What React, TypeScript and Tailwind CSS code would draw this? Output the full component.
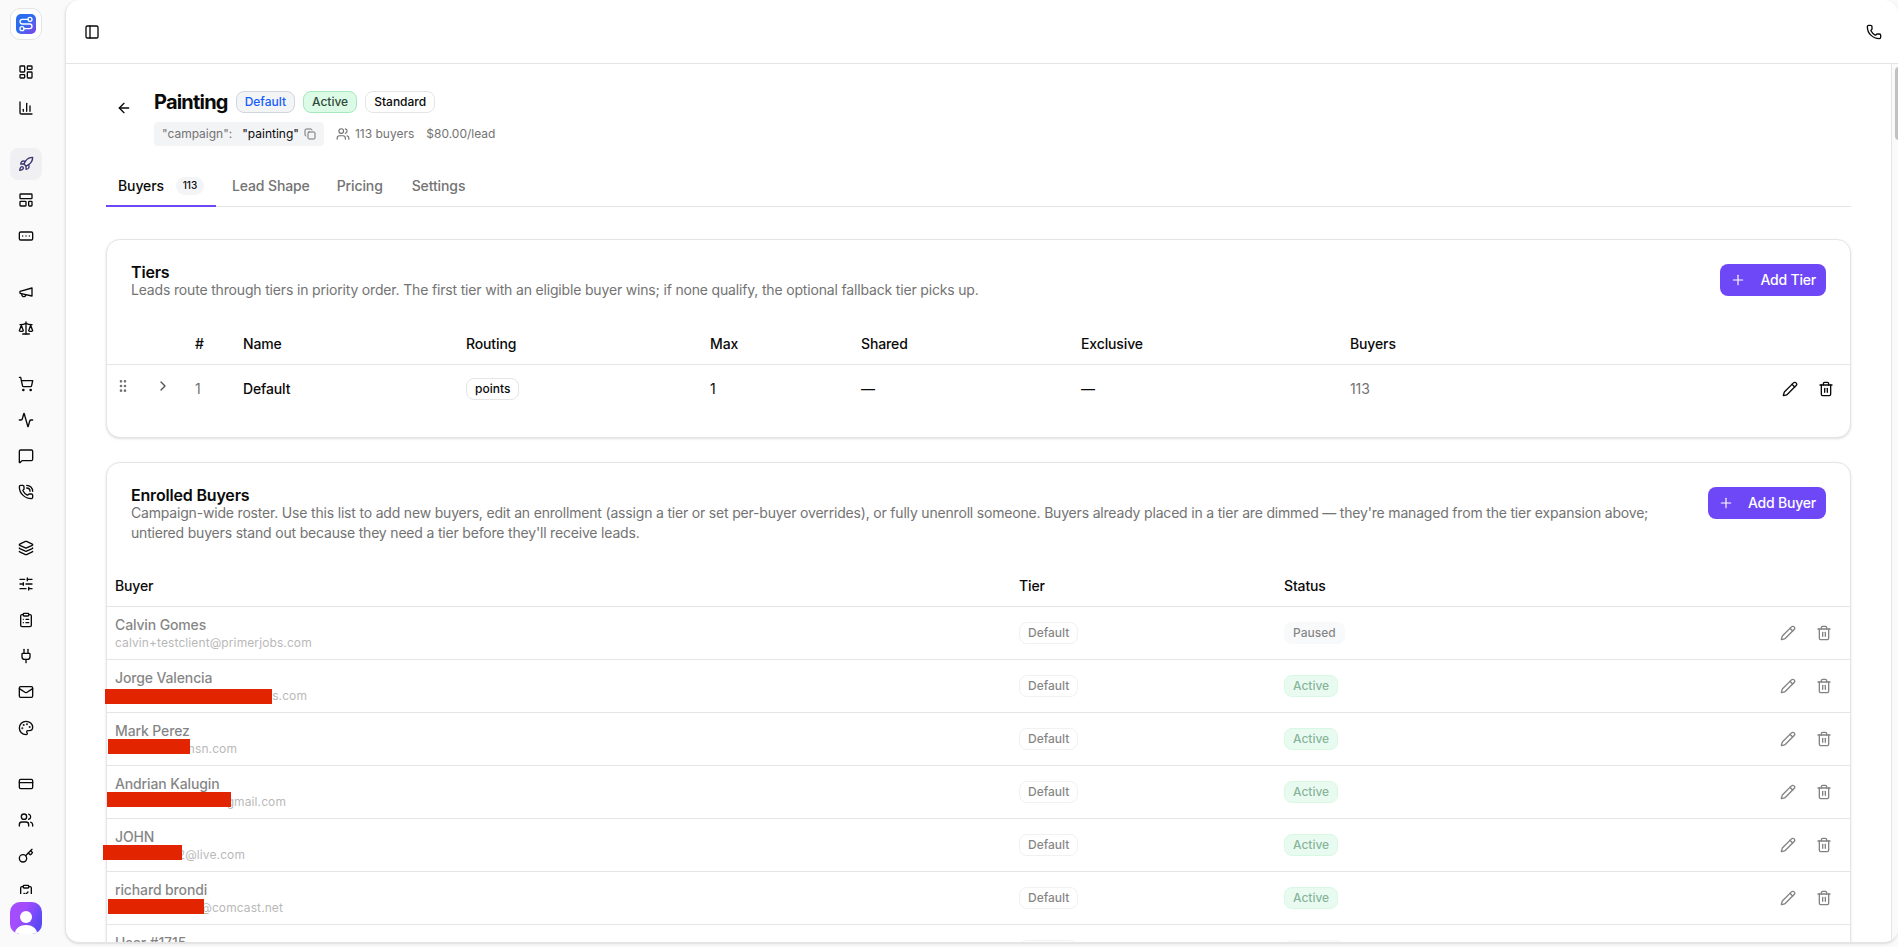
import React from 'react';
import {
  Activity,
  ArrowLeft,
  ChartColumn,
  ChevronRight,
  ClipboardCheck,
  ClipboardList,
  Copy,
  CreditCard,
  GripVertical,
  Key,
  Layers,
  LayoutDashboard,
  LayoutTemplate,
  Mail,
  MessageSquare,
  Palette,
  PanelLeft,
  Pencil,
  Phone,
  PhoneCall,
  Plug,
  Plus,
  RectangleEllipsis,
  Rocket,
  Route,
  Scale,
  ShoppingCart,
  SlidersHorizontal,
  Trash2,
  Users,
} from 'lucide-react';

interface Buyer {
  name: string;
  email: string;
  emailWidth?: string;
  mask?: string;
  status: 'Active' | 'Paused';
}

type IconType = React.ComponentType<{ className?: string }>;

const Megaphone = ({ className }: { className?: string }) => (
  <svg
    viewBox="0 0 24 24"
    fill="none"
    stroke="currentColor"
    strokeWidth="2"
    strokeLinecap="round"
    strokeLinejoin="round"
    className={className}
  >
    <path d="m3 11 18-5v12L3 14v-3z" />
    <path d="M11.6 16.8a3 3 0 1 1-5.8-1.6" />
  </svg>
);

const navGroups: IconType[][] = [
  [LayoutDashboard, ChartColumn],
  [Rocket, LayoutTemplate, RectangleEllipsis],
  [Megaphone, Scale],
  [ShoppingCart, Activity, MessageSquare, PhoneCall],
  [Layers, SlidersHorizontal, ClipboardList, Plug, Mail, Palette],
  [CreditCard, Users, Key, ClipboardCheck],
];

const buyers: Buyer[] = [
  { name: 'Calvin Gomes', email: 'calvin+testclient@primerjobs.com', status: 'Paused' },
  { name: 'Jorge Valencia', email: 's.com', emailWidth: 'w-[192px]', mask: '-left-[10px] top-[21px] w-[167px]', status: 'Active' },
  { name: 'Mark Perez', email: 'msn.com', emailWidth: 'w-[122px]', mask: '-left-[7px] top-[18px] w-[82px]', status: 'Active' },
  { name: 'Andrian Kalugin', email: 'gmail.com', emailWidth: 'w-[171px]', mask: '-left-[8px] top-[18px] w-[124px]', status: 'Active' },
  { name: 'JOHN', email: '2@live.com', emailWidth: 'w-[130px]', mask: '-left-[12px] top-[18px] w-[79px]', status: 'Active' },
  { name: 'richard brondi', email: '@comcast.net', emailWidth: 'w-[168px]', mask: '-left-[7px] top-[19px] w-[96px]', status: 'Active' },
  { name: 'User #1715', email: '', status: 'Paused' },
];

const badgeStyles = {
  outline: 'border-neutral-200 text-neutral-950',
  info: 'border-gray-300 bg-gray-100 text-blue-600',
  success: 'border-[#a5e8bd] bg-[#dcfbe7] text-[#2f4a3a]',
  active: 'border-[#b0f5c9] bg-[#d5f8e4] text-[#0b6b35]',
  muted: 'border-transparent bg-gray-100 text-neutral-950',
};

const Badge = ({ variant = 'outline', children }: { variant?: keyof typeof badgeStyles; children: React.ReactNode }) => (
  <span className={`inline-flex h-[22px] items-center rounded-lg border px-2 text-xs font-medium tracking-normal ${badgeStyles[variant]}`}>
    {children}
  </span>
);

const AddButton = ({ label }: { label: string }) => (
  <button className="flex h-8 shrink-0 items-center gap-3.5 rounded-lg bg-[#6e48f6] px-2.5 text-sm font-medium tracking-[-0.2px] text-white">
    <Plus className="h-4 w-4" strokeWidth={1.75} />
    {label}
  </button>
);

const RowActions = () => (
  <div className="flex justify-end gap-5">
    <Pencil className="h-4 w-4" />
    <Trash2 className="h-4 w-4" />
  </div>
);

const Sidebar = () => (
  <aside className="flex h-full w-[65px] shrink-0 flex-col pl-2.5 pt-2">
    <div className="flex h-8 w-8 shrink-0 items-center justify-center rounded-[10px] border border-neutral-200 bg-white">
      <div className="flex h-5 w-5 items-center justify-center rounded-[5px] bg-linear-to-br from-[#2b6cf0] from-50% to-[#7c3aed]">
        <Route className="h-4 w-4 text-white" strokeWidth={2} />
      </div>
    </div>
    <nav className="mt-4 flex h-[838px] flex-col gap-6 overflow-hidden">
      {navGroups.map((group, i) => (
        <div key={i} className="flex flex-col gap-1">
          {group.map((Icon, j) => {
            const current = Icon === Rocket;
            return (
              <a
                key={j}
                className={`flex h-8 w-8 shrink-0 items-center justify-center rounded-lg ${current ? 'bg-[#f0f0f3] text-[#3b3470]' : 'text-neutral-950'}`}
              >
                <Icon className="h-4 w-4" />
              </a>
            );
          })}
        </div>
      ))}
    </nav>
    <svg viewBox="0 0 32 32" className="mt-2 h-8 w-8 shrink-0 rounded-[10px]">
      <defs>
        <linearGradient id="avatar" x1="0" y1="0" x2="1" y2="0.5">
          <stop offset="0.45" stopColor="#a34dff" />
          <stop offset="1" stopColor="#5a48f5" />
        </linearGradient>
      </defs>
      <rect width="32" height="32" fill="url(#avatar)" />
      <circle cx="16" cy="15" r="6" fill="white" />
      <path d="M4.5 32c1-6 5.5-9 11.5-9s10.5 3 11.5 9z" fill="white" />
    </svg>
  </aside>
);

const PageHeader = () => (
  <div className="flex h-14 gap-3">
    <div className="flex h-9 w-9 items-center justify-center">
      <ArrowLeft className="h-4 w-4" />
    </div>
    <div className="flex flex-col gap-2">
      <div className="flex h-6 items-center gap-2">
        <h1 className="text-xl font-bold tracking-[-0.8px]">Painting</h1>
        <Badge variant="info">Default</Badge>
        <Badge variant="success">Active</Badge>
        <Badge>Standard</Badge>
      </div>
      <div className="flex h-6 items-center text-xs text-neutral-500">
        <div className="flex h-6 items-center rounded bg-gray-100 px-2">
          <span>"campaign":</span>
          <span className="ml-2.5 text-neutral-950">"painting"</span>
          <Copy className="ml-[5px] h-3 w-3" />
        </div>
        <Users className="ml-3 mr-[5px] h-3.5 w-3.5" />
        <span>113 buyers</span>
        <span className="ml-3">$80.00/lead</span>
      </div>
    </div>
  </div>
);

const Tabs = () => (
  <div className="mt-5 flex h-[41px] border-b border-neutral-200 text-sm font-medium tracking-[-0.12px] text-neutral-500">
    <div className="-mb-px flex w-[110px] items-center justify-between border-b-2 border-[#6e48f6] px-3 text-neutral-950">
      Buyers
      <span className="flex h-[18px] w-7 items-center justify-center rounded-full bg-gray-100 text-[10px] tracking-normal">113</span>
    </div>
    <div className="flex items-center px-4">Lead Shape</div>
    <div className="flex items-center pl-[11px] pr-[13px]">Pricing</div>
    <div className="flex items-center px-4">Settings</div>
  </div>
);

const TiersCard = () => (
  <section className="mt-8 h-[199px] rounded-[14px] border border-neutral-200 bg-white pt-6 shadow-sm">
    <div className="flex h-[60px] items-start justify-between px-6">
      <div>
        <h2 className="text-base font-semibold leading-4 tracking-[-0.18px]">Tiers</h2>
        <p className="text-sm tracking-[-0.17px] text-neutral-500">
          Leads route through tiers in priority order. The first tier with an eligible buyer wins; if none qualify, the
          optional fallback tier picks up.
        </p>
      </div>
      <AddButton label="Add Tier" />
    </div>
    <table className="w-full table-fixed text-left text-sm tracking-[-0.13px]">
      <colgroup>
        <col className="w-[40px]" />
        <col className="w-[40px]" />
        <col className="w-[48px]" />
        <col className="w-[223px]" />
        <col className="w-[244px]" />
        <col className="w-[151px]" />
        <col className="w-[220px]" />
        <col className="w-[269px]" />
        <col />
      </colgroup>
      <thead>
        <tr className="h-10 border-b border-neutral-200">
          {['', '', '#', 'Name', 'Routing', 'Max', 'Shared', 'Exclusive', 'Buyers'].map((h, i) => (
            <th key={i} className="px-2 font-medium">{h}</th>
          ))}
        </tr>
      </thead>
      <tbody>
        <tr className="h-[49px]">
          <td className="px-2 pb-1.5 text-neutral-500"><GripVertical className="h-4 w-4" /></td>
          <td className="px-2 pb-1.5 text-neutral-600"><ChevronRight className="h-4 w-4" /></td>
          <td className="px-2 text-neutral-500">1</td>
          <td className="px-2 font-medium">Default</td>
          <td className="px-2"><div className="flex"><Badge>points</Badge></div></td>
          <td className="px-2">1</td>
          <td className="px-2">—</td>
          <td className="px-2">—</td>
          <td className="pl-2 pr-4">
            <div className="flex items-center justify-between">
              <span className="text-neutral-500">113</span>
              <RowActions />
            </div>
          </td>
        </tr>
      </tbody>
    </table>
  </section>
);

const BuyerRow = ({ buyer }: { buyer: Buyer }) => (
  <tr className="h-[53px] border-b border-neutral-200">
    <td className="px-2">
      <div className="relative">
        <div className="opacity-50">
          <div className="font-medium">{buyer.name}</div>
          <div className={`h-4 text-xs tracking-[0.1px] text-neutral-500 ${buyer.emailWidth ? `text-right ${buyer.emailWidth}` : ''}`}>
            {buyer.email}
          </div>
        </div>
        {buyer.mask && <div className={`absolute h-[15px] bg-[#e32400] ${buyer.mask}`} />}
      </div>
    </td>
    <td className="px-2"><div className="flex opacity-50"><Badge>Default</Badge></div></td>
    <td className="px-2">
      <div className="flex opacity-50"><Badge variant={buyer.status === 'Active' ? 'active' : 'muted'}>{buyer.status}</Badge></div>
    </td>
    <td className="pr-[18px]"><div className="opacity-50"><RowActions /></div></td>
  </tr>
);

const EnrolledBuyersCard = () => (
  <section className="mt-6 rounded-[14px] border border-neutral-200 bg-white pt-6 shadow-sm">
    <div className="flex h-[79px] items-start justify-between px-6">
      <div className="w-[1540px]">
        <h2 className="text-base font-semibold leading-4 tracking-[-0.18px]">Enrolled Buyers</h2>
        <p className="text-sm tracking-[-0.185px] text-neutral-500">
          Campaign-wide roster. Use this list to add new buyers, edit an enrollment (assign a tier or set per-buyer
          overrides), or fully unenroll someone. Buyers already placed in a tier are dimmed — they're managed from the
          tier expansion above; untiered buyers stand out because they need a tier before they'll receive leads.
        </p>
      </div>
      <AddButton label="Add Buyer" />
    </div>
    <table className="w-full table-fixed text-left text-sm tracking-[-0.13px]">
      <colgroup>
        <col className="w-[904px]" />
        <col className="w-[265px]" />
        <col className="w-[287px]" />
        <col />
      </colgroup>
      <thead>
        <tr className="h-10 border-b border-neutral-200">
          {['Buyer', 'Tier', 'Status', ''].map((h) => (
            <th key={h} className="px-2 font-medium">{h}</th>
          ))}
        </tr>
      </thead>
      <tbody>
        {buyers.map((buyer) => (
          <BuyerRow key={buyer.name} buyer={buyer} />
        ))}
      </tbody>
    </table>
  </section>
);

export default function App() {
  return (
    <div className="flex h-[947px] w-[1898px] overflow-hidden bg-[#fafafa] font-['Inter',sans-serif] text-neutral-950">
      <Sidebar />
      <div className="flex h-[943px] flex-1 flex-col overflow-hidden rounded-[14px] border-b border-l border-neutral-200 bg-white shadow-sm">
        <header className="flex h-16 shrink-0 items-center justify-between border-b border-neutral-200 pl-[18px] pr-4">
          <PanelLeft className="h-4 w-4" />
          <Phone className="h-4 w-4" />
        </header>
        <div className="flex min-h-0 flex-1">
          <main className="min-w-0 flex-1 overflow-hidden px-10 pt-[26px]">
            <PageHeader />
            <Tabs />
            <TiersCard />
            <EnrolledBuyersCard />
          </main>
          <div className="w-[7px] shrink-0 overflow-hidden border-l border-neutral-200 bg-[#fafafa] pl-[3px] pt-[3px]">
            <div className="h-[73px] w-2 rounded-full bg-[#c1c1c1]" />
          </div>
        </div>
      </div>
    </div>
  );
}
